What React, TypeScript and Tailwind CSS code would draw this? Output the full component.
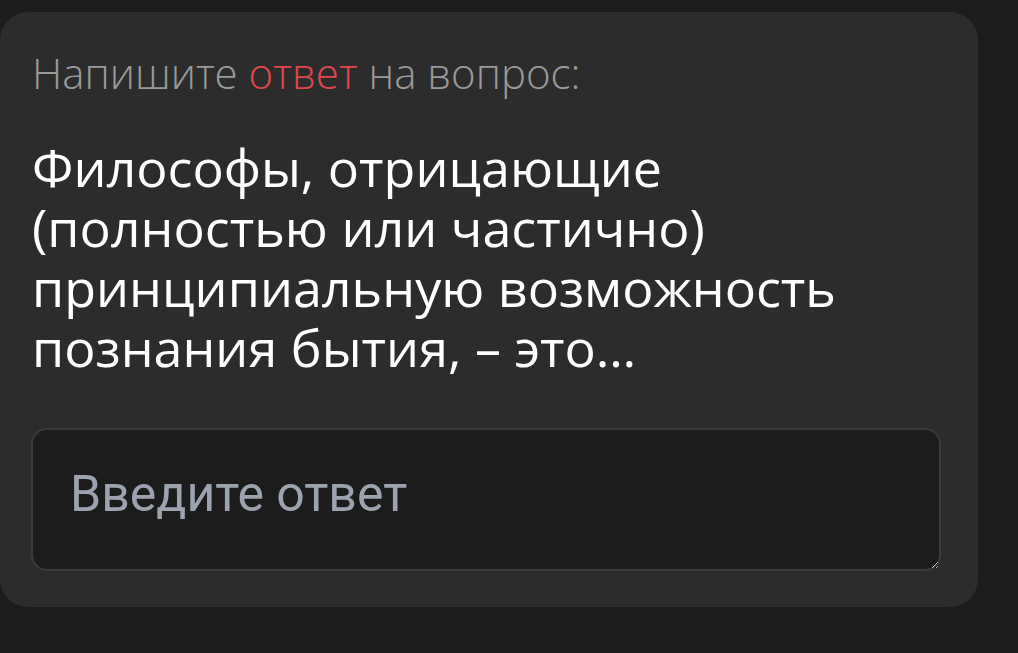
import React from "react";

export default function App() {
  return (
    <div className="w-[1018px] h-[653px] bg-[#1c1c1c] pt-[12px] overflow-hidden">
      <div className="w-[978px] h-[595px] bg-[#2c2c2c] rounded-[28px] pl-[31px] pr-[37px] pt-[39px]">
        <div
          className="text-[42px] leading-[44px] font-light text-[#9a9a9a] pl-[1px]"
          style={{ fontFamily: '"Open Sans", sans-serif' }}
        >
          Напишите <span className="text-[#e0474d]">ответ</span> на вопрос:
        </div>
        <div
          className="mt-[42px] text-[52px] leading-[60px] text-white pl-[1px]"
          style={{ fontFamily: '"Open Sans", sans-serif' }}
        >
          Философы, отрицающие (полностью или частично) принципиальную возможность познания бытия, – это…
        </div>
        <textarea
          className="mt-[51px] block w-[910px] h-[143px] bg-[#1c1c1c] border-2 border-[#3b3b3b] rounded-[16px] pl-[37px] pt-[39px] text-[50px] leading-[50px] text-white placeholder:text-[#9ca3af] outline-none"
          style={{ fontFamily: 'Roboto, sans-serif' }}
          placeholder="Введите ответ"
        />
      </div>
    </div>
  );
}
